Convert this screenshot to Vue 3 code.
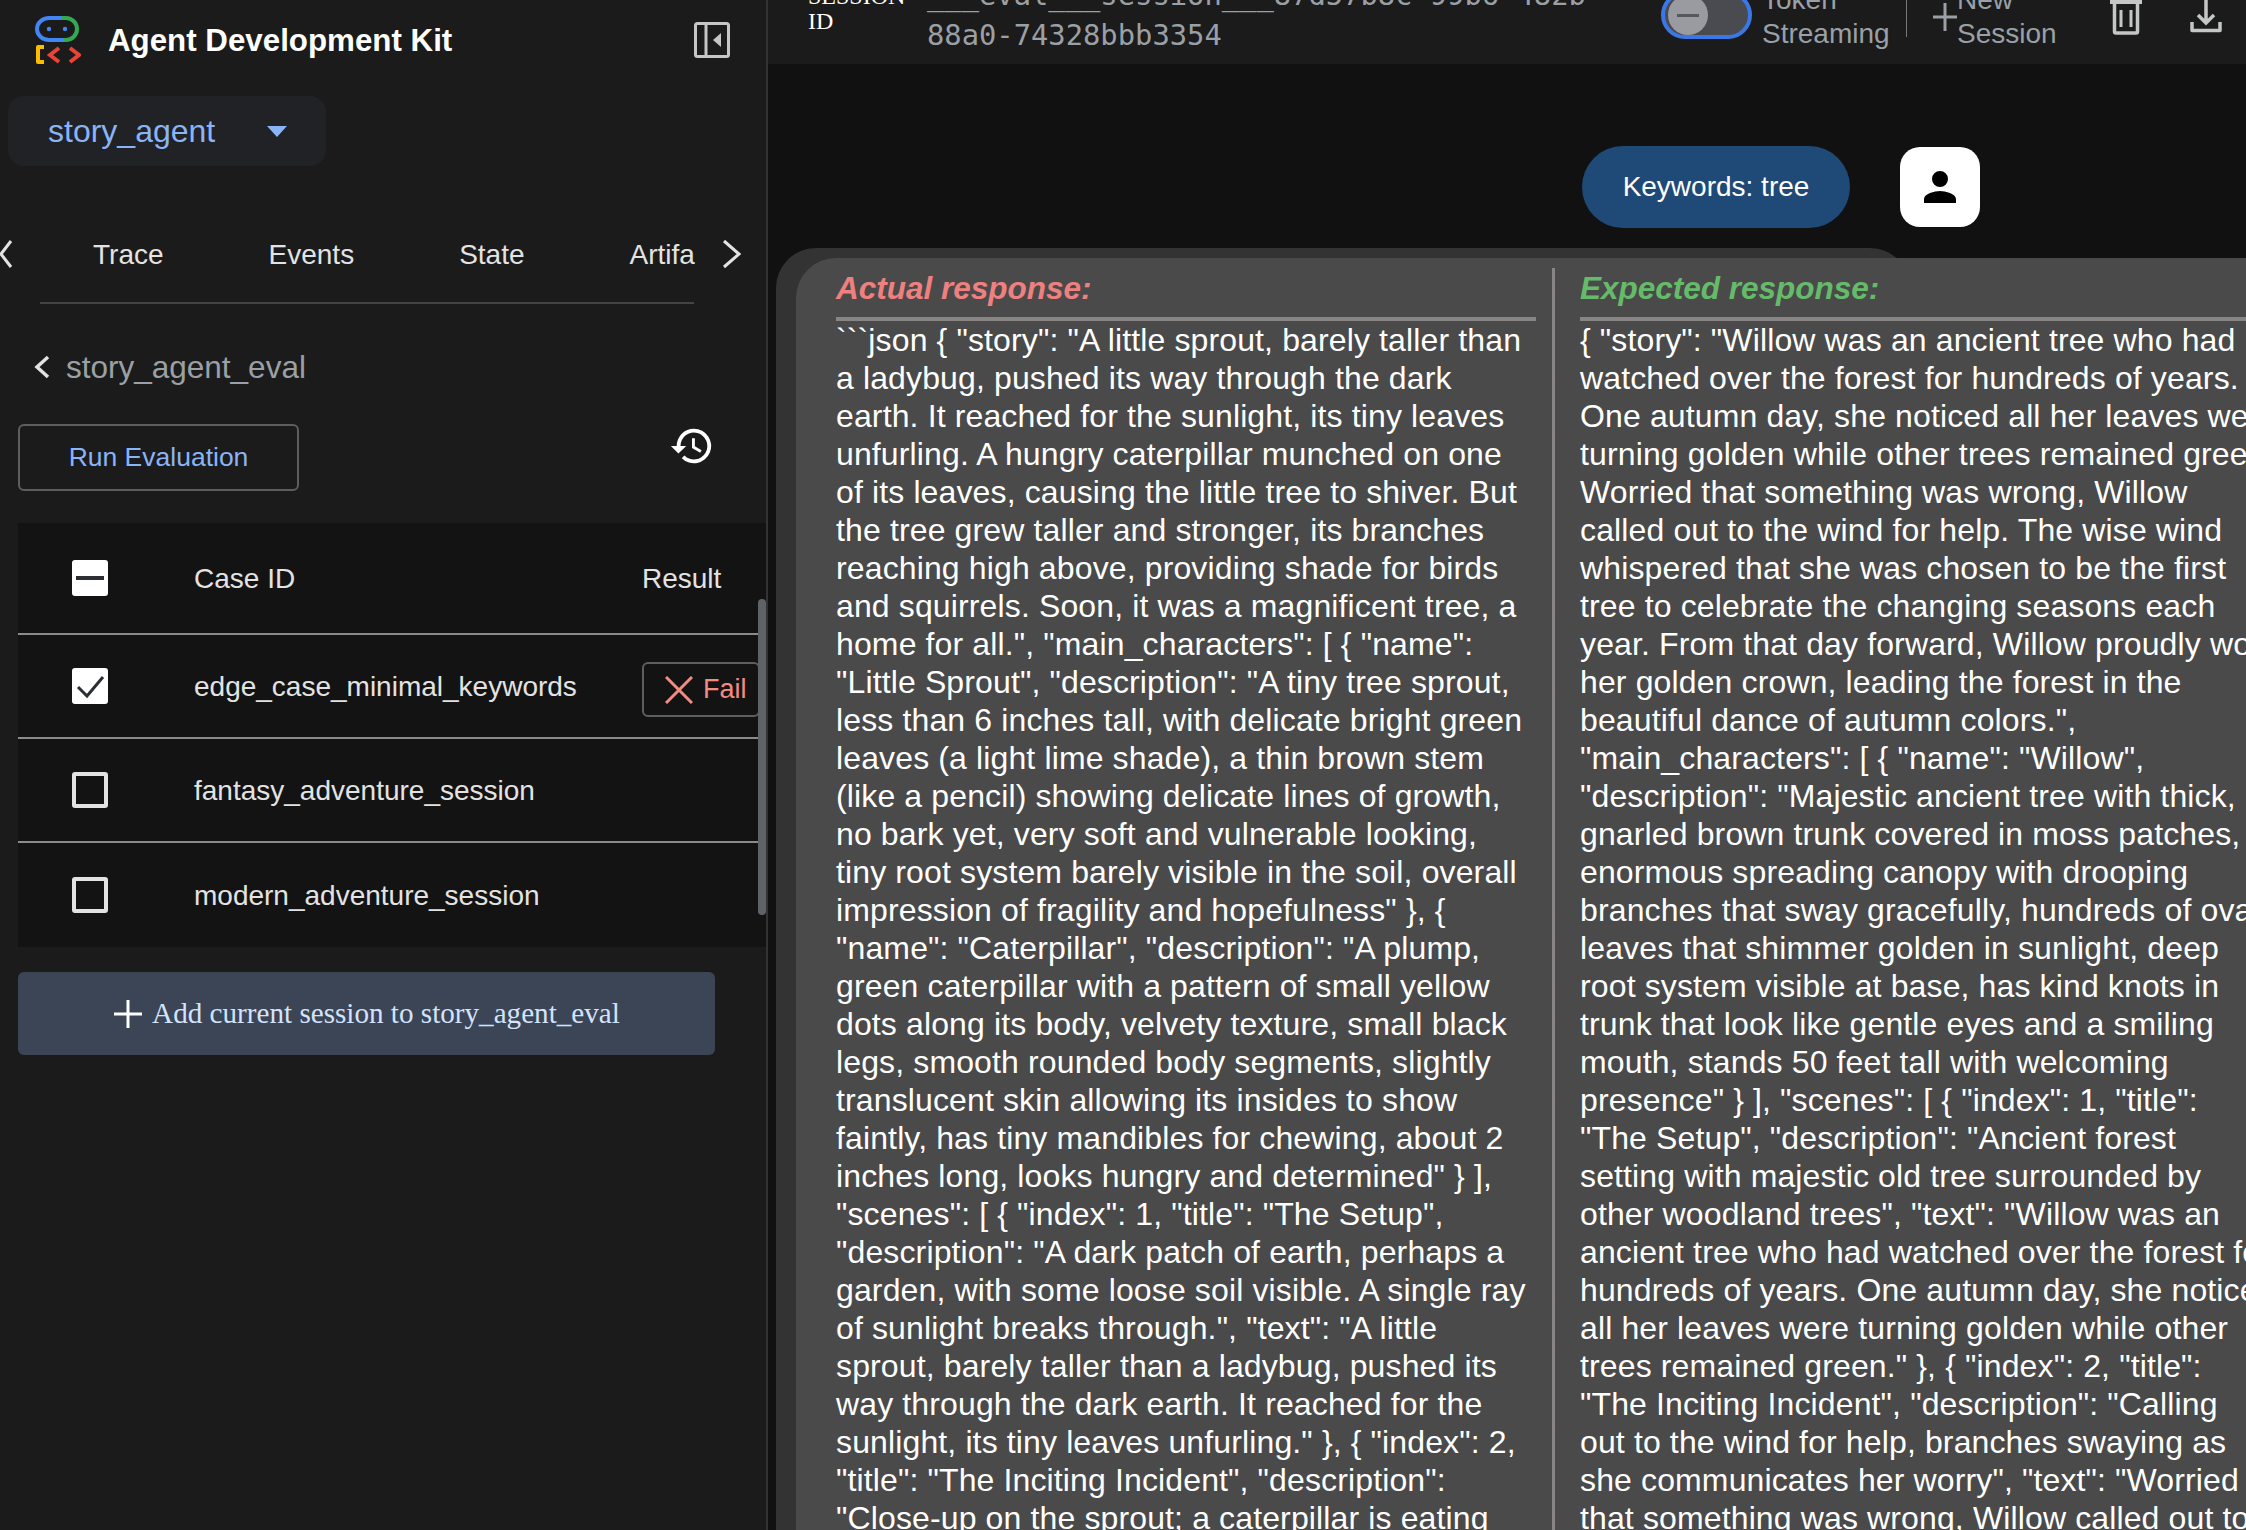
<script setup>
const actual = [
  '```json { "story": "A little sprout, barely taller than',
  'a ladybug, pushed its way through the dark',
  'earth. It reached for the sunlight, its tiny leaves',
  'unfurling. A hungry caterpillar munched on one',
  'of its leaves, causing the little tree to shiver. But',
  'the tree grew taller and stronger, its branches',
  'reaching high above, providing shade for birds',
  'and squirrels. Soon, it was a magnificent tree, a',
  'home for all.", "main_characters": [ { "name":',
  '"Little Sprout", "description": "A tiny tree sprout,',
  'less than 6 inches tall, with delicate bright green',
  'leaves (a light lime shade), a thin brown stem',
  '(like a pencil) showing delicate lines of growth,',
  'no bark yet, very soft and vulnerable looking,',
  'tiny root system barely visible in the soil, overall',
  'impression of fragility and hopefulness" }, {',
  '"name": "Caterpillar", "description": "A plump,',
  'green caterpillar with a pattern of small yellow',
  'dots along its body, velvety texture, small black',
  'legs, smooth rounded body segments, slightly',
  'translucent skin allowing its insides to show',
  'faintly, has tiny mandibles for chewing, about 2',
  'inches long, looks hungry and determined" } ],',
  '"scenes": [ { "index": 1, "title": "The Setup",',
  '"description": "A dark patch of earth, perhaps a',
  'garden, with some loose soil visible. A single ray',
  'of sunlight breaks through.", "text": "A little',
  'sprout, barely taller than a ladybug, pushed its',
  'way through the dark earth. It reached for the',
  'sunlight, its tiny leaves unfurling." }, { "index": 2,',
  '"title": "The Inciting Incident", "description":',
  '"Close-up on the sprout; a caterpillar is eating',
].join('\n')
const expected = [
  '{ "story": "Willow was an ancient tree who had',
  'watched over the forest for hundreds of years.',
  'One autumn day, she noticed all her leaves were',
  'turning golden while other trees remained green.',
  'Worried that something was wrong, Willow',
  'called out to the wind for help. The wise wind',
  'whispered that she was chosen to be the first',
  'tree to celebrate the changing seasons each',
  'year. From that day forward, Willow proudly wore',
  'her golden crown, leading the forest in the',
  'beautiful dance of autumn colors.",',
  '"main_characters": [ { "name": "Willow",',
  '"description": "Majestic ancient tree with thick,',
  'gnarled brown trunk covered in moss patches,',
  'enormous spreading canopy with drooping',
  'branches that sway gracefully, hundreds of oval',
  'leaves that shimmer golden in sunlight, deep',
  'root system visible at base, has kind knots in',
  'trunk that look like gentle eyes and a smiling',
  'mouth, stands 50 feet tall with welcoming',
  'presence" } ], "scenes": [ { "index": 1, "title":',
  '"The Setup", "description": "Ancient forest',
  'setting with majestic old tree surrounded by',
  'other woodland trees", "text": "Willow was an',
  'ancient tree who had watched over the forest for',
  'hundreds of years. One autumn day, she noticed',
  'all her leaves were turning golden while other',
  'trees remained green." }, { "index": 2, "title":',
  '"The Inciting Incident", "description": "Calling',
  'out to the wind for help, branches swaying as',
  'she communicates her worry", "text": "Worried',
  'that something was wrong, Willow called out to',
].join('\n')
const rows = [
  { id: 'edge_case_minimal_keywords', checked: true, fail: true },
  { id: 'fantasy_adventure_session' },
  { id: 'modern_adventure_session' },
]
</script>

<template>
  <div class="app">
    <aside class="side">
      <header class="brand">
        <svg class="logo" width="46" height="50" viewBox="0 0 46 50" fill="none">
          <path d="M27 3H14A12 11 0 0 0 14 25H29" stroke="#4285f4" stroke-width="4"/>
          <path d="M27 3H31A11 11 0 0 1 31 25H29" stroke="#34a853" stroke-width="4"/>
          <circle cx="14" cy="14" r="2.2" fill="#4285f4"/><circle cx="30" cy="14" r="2.2" fill="#4285f4"/>
          <path d="M9 32H3V47H9" stroke="#fbbc04" stroke-width="4" stroke-linejoin="round"/>
          <path d="M24 33L15 40L24 47M35 33L44 40L35 47" stroke="#ea4335" stroke-width="4"/>
        </svg>
        <h1>Agent Development Kit</h1>
        <svg class="collapse" width="36" height="36" viewBox="0 0 36 36" fill="none">
          <rect x="1.5" y="1.5" width="33" height="33" rx="2" stroke="#c4c7c5" stroke-width="3"/>
          <path d="M12 2V34" stroke="#c4c7c5" stroke-width="3"/><path d="M27 11L19 18L27 25Z" fill="#c4c7c5"/>
        </svg>
      </header>
      <div class="picker"><span>story_agent</span><i class="caret"></i></div>
      <nav class="tabs">
        <svg class="chev" width="20" height="30" viewBox="0 0 20 30" fill="none"><path d="M11 2L1 15L11 28" stroke="#e3e3e3" stroke-width="3"/></svg>
        <div class="tablist"><span>Trace</span><span>Events</span><span>State</span><span>Artifacts</span></div>
        <svg class="chev next" width="20" height="30" viewBox="0 0 20 30" fill="none"><path d="M2 2L17 15L2 28" stroke="#e3e3e3" stroke-width="3"/></svg>
      </nav>
      <div class="crumb">
        <svg width="16" height="24" viewBox="0 0 16 24" fill="none"><path d="M14 2L3 12L14 22" stroke="#e3e3e3" stroke-width="3.5"/></svg>
        <span>story_agent_eval</span>
      </div>
      <div class="actions">
        <button class="run">Run Evaluation</button>
        <svg class="history" width="46" height="46" viewBox="0 0 24 24" fill="#fff"><path d="M13 3a9 9 0 0 0-9 9H1l3.9 3.9L9 12H6a7 7 0 1 1 2.05 4.95L6.64 18.36A9 9 0 1 0 13 3zm-1 5v5l4.25 2.52.77-1.28-3.52-2.09V8z"/></svg>
      </div>
      <div class="table">
        <div class="row head">
          <span class="box on"><i class="dash"></i></span><span class="name">Case ID</span><span class="result">Result</span>
        </div>
        <div v-for="r in rows" :key="r.id" class="row">
          <span class="box" :class="{ on: r.checked }">
            <svg v-if="r.checked" width="36" height="36" viewBox="0 0 36 36" fill="none"><path d="M6 19L15 28L31 9" stroke="#2b2f33" stroke-width="3"/></svg>
          </span>
          <span class="name">{{ r.id }}</span>
          <span v-if="r.fail" class="fail">
            <svg width="28" height="28" viewBox="0 0 28 28" fill="none"><path d="M1 1L27 27M27 1L1 27" stroke="#f28b82" stroke-width="3"/></svg>Fail
          </span>
        </div>
        <i class="scroll"></i>
      </div>
      <button class="add">
        <svg width="30" height="30" viewBox="0 0 30 30" fill="none"><path d="M15 1V29M1 15H29" stroke="#fff" stroke-width="3"/></svg>
        Add current session to story_agent_eval
      </button>
    </aside>

    <main class="main">
      <header class="top">
        <div class="session">
          <b>SESSION<br>ID</b>
          <code>___eval___session___87d57b8c-99b6-482b-88a0-74328bbb3354</code>
        </div>
        <div class="tools">
          <div class="switch"><i class="knob"><em></em></i></div>
          <span class="lbl token">Token<br>Streaming</span>
          <i class="sep"></i>
          <svg class="plus" width="24" height="28" viewBox="0 0 24 28" fill="none"><path d="M12 0V28M0 14H24" stroke="#9aa0a6" stroke-width="3"/></svg>
          <span class="lbl">New<br>Session</span>
          <svg class="trash" width="32" height="40" viewBox="0 0 32 40" fill="none"><path d="M4.5 8V36.5Q4.5 38 6 38H26Q27.5 38 27.5 36.5V8" stroke="#c4c7c5" stroke-width="3.5"/><path d="M0 6H32" stroke="#c4c7c5" stroke-width="6"/><path d="M11 15V32M21 15V32" stroke="#c4c7c5" stroke-width="3"/></svg>
          <svg class="down" width="32" height="38" viewBox="0 0 32 38" fill="none"><path d="M16 2V27M8 19L16 27L24 19" stroke="#c4c7c5" stroke-width="3.5"/><path d="M2 26V34.5H30V26" stroke="#c4c7c5" stroke-width="3.5" stroke-linejoin="round"/></svg>
        </div>
      </header>
      <section class="chat">
        <div class="user">
          <div class="bubble">Keywords: tree</div>
          <div class="avatar">
            <svg width="48" height="48" viewBox="0 0 24 24" fill="#000"><path d="M12 12a4 4 0 1 0 0-8 4 4 0 0 0 0 8zm0 2c-2.67 0-8 1.34-8 4v2h16v-2c0-2.66-5.33-4-8-4z"/></svg>
          </div>
        </div>
        <div class="outer">
          <div class="inner">
            <div class="col">
              <h2 class="bad">Actual response:</h2>
              <p>{{ actual }}</p>
            </div>
            <div class="col second">
              <h2 class="good">Expected response:</h2>
              <p>{{ expected }}</p>
            </div>
          </div>
        </div>
      </section>
    </main>
  </div>
</template>

<style>
html, body { margin: 0; background: #111; overflow: hidden; }
</style>

<style scoped>
.app { display: flex; width: 2246px; height: 1530px; overflow: hidden; font-family: "Liberation Sans", Arial, sans-serif; background: #111; }
.side { width: 768px; flex: none; box-sizing: border-box; background: #1b1b1b; border-right: 2px solid #333; color: #e3e3e3; }
.brand { display: flex; align-items: center; height: 80px; padding-left: 35px; }
.logo { flex: none; }
.brand h1 { flex: none; margin: 2px 0 0 27px; font-size: 31.3px; font-weight: 700; color: #fff; width: 586px; white-space: nowrap; }
.collapse { flex: none; }
.picker { display: flex; align-items: center; width: 318px; height: 70px; margin: 16px 0 0 8px; border-radius: 16px; background: #212226; color: #8ab4f8; font-size: 32px; box-sizing: border-box; padding-left: 40px; }
.caret { width: 0; height: 0; margin-left: 52px; border: 10px solid transparent; border-top: 11px solid #8ab4f8; border-bottom: 0; }
.tabs { display: flex; align-items: center; height: 100px; margin-top: 38px; position: relative; }
.tabs::after { content: ""; position: absolute; left: 40px; width: 654px; top: 98px; height: 2px; background: #444; }
.chev { flex: none; }
.chev.next { margin-left: 27px; }
.tablist { flex: none; display: flex; gap: 105px; width: 657px; margin-left: 18px; padding: 2px 0 0 55px; box-sizing: border-box; font-size: 28px; overflow: hidden; color: #e3e3e3; white-space: nowrap; }
.tablist span { flex: none; }
.crumb { display: flex; align-items: center; gap: 16px; margin: 41px 0 0 34px; height: 44px; font-size: 31.5px; color: #9aa0a6; }
.actions { display: flex; align-items: flex-start; justify-content: space-between; width: 715px; box-sizing: border-box; padding-left: 18px; margin-top: 35px; }
.history { margin-top: -1px; }
.run { width: 281px; height: 67px; background: transparent; border: 2px solid #5c5f62; border-radius: 6px; color: #8ab4f8; font: 26.5px "Liberation Sans", Arial, sans-serif; }
.table { position: relative; margin: 32px 0 0 18px; background: #131313; height: 424px; }
.row { display: grid; grid-template-columns: 176px 448px 1fr; align-items: center; height: 102px; border-bottom: 2px solid #8a8a8a; font-size: 28px; color: #e3e3e3; margin-right: 8px; }
.row.head { height: 110px; }
.row:last-of-type { height: 104px; border-bottom: 0; }
.name, .result { padding-top: 2px; }
.box { width: 36px; height: 36px; box-sizing: border-box; border: 4px solid #e3e3e3; border-radius: 3px; margin-left: 54px; display: flex; align-items: center; justify-content: center; }
.box.on { background: #fff; border: 0; }
.dash { width: 28px; height: 4px; background: #2b2f33; }
.fail { display: flex; align-items: center; gap: 10px; width: 118px; height: 55px; margin-top: 7px; box-sizing: border-box; padding-left: 21px; border: 2px solid #5c5f62; border-radius: 6px; color: #f28b82; font-size: 27px; white-space: nowrap; }
.scroll { position: absolute; right: 0; top: 76px; width: 8px; height: 316px; background: #5f6368; border-radius: 4px; }
.add { display: flex; align-items: center; justify-content: center; gap: 9px; width: 697px; height: 83px; margin: 25px 0 0 18px; background: #3b4556; border: 0; border-radius: 6px; color: #d3e3fd; font: 29.15px "Liberation Serif", "Times New Roman", serif; }
.main { flex: 1; min-width: 0; display: flex; flex-direction: column; }
.top { flex: none; display: flex; align-items: flex-end; height: 64px; padding-left: 40px; background: #1b1b1b; overflow: hidden; }
.session { flex: none; display: flex; width: 799px; padding-bottom: 9px; }
.session b { flex: none; width: 119px; margin-top: 9px; font: 400 24px/25px "Liberation Serif", serif; color: #fff; }
.session code { flex: none; width: 680px; font: 28.8px/40px "DejaVu Sans Mono", monospace; color: #9aa0a6; }
.tools { flex: none; display: flex; align-items: flex-end; margin-left: 54px; }
.switch { flex: none; width: 91px; height: 48px; margin-bottom: 25px; box-sizing: border-box; border: 4px solid #3b78e7; border-radius: 24px; background: #4a4b50; }
.knob { display: flex; align-items: center; justify-content: center; width: 40px; height: 40px; margin-left: 3px; border-radius: 50%; background: #9a9ba0; }
.knob em { width: 22px; height: 3px; background: #55585c; }
.lbl { flex: none; font-size: 28px; line-height: 34px; color: #9aa0a6; margin-bottom: 13px; }
.token { margin-left: 10px; width: 126px; }
.sep { flex: none; width: 1px; height: 50px; margin: 0 0 27px 18px; background: #777; }
.plus { flex: none; margin: 0 0 33px 26px; }
.trash { flex: none; margin: 0 0 29px 53px; }
.down { flex: none; margin: 0 0 30px 48px; }
.chat { flex: 1; min-height: 0; padding-left: 8px; }
.user { display: flex; align-items: center; margin-top: 82px; padding-left: 806px; }
.bubble { display: flex; align-items: center; justify-content: center; width: 268px; height: 82px; border-radius: 41px; background: #1f4a77; color: #fff; font-size: 28px; box-sizing: border-box; }
.avatar { display: flex; align-items: center; justify-content: center; width: 80px; height: 80px; margin-left: 50px; background: #fff; border-radius: 20px; }
.outer { margin-top: 20px; background: #333; border-radius: 40px 40px 0 0; padding: 10px 0 0 20px; width: 1134px; box-sizing: border-box; height: 1400px; }
.inner { display: flex; width: 1500px; background: #4a4a4a; border-radius: 40px 0 0 0; padding: 10px 0 0 40px; box-sizing: border-box; height: 1400px; }
.col { width: 700px; flex: none; padding-right: 16px; }
.second { border-left: 3px solid #8a8585; padding-left: 25px; width: 700px; }
h2 { margin: 0; font-size: 31.5px; line-height: 40px; font-style: italic; font-weight: 700; padding-bottom: 9px; border-bottom: 4px solid #8a8585; }
.bad { color: #ee8080; }
.good { color: #66bb6a; }
p { margin: 0; font-size: 32px; line-height: 38px; letter-spacing: 0.13px; white-space: pre; color: #fff; }
</style>
